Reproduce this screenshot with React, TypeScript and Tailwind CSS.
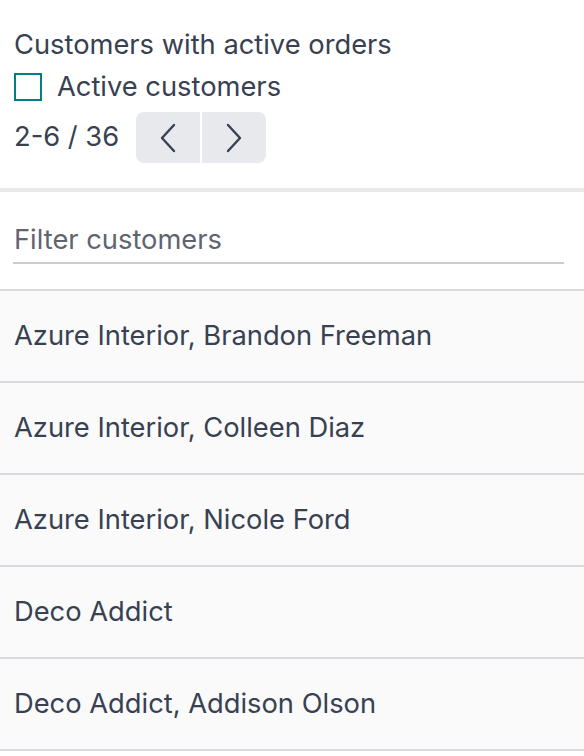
import { useState } from 'react';

const customers = [
  'Azure Interior, Brandon Freeman',
  'Azure Interior, Colleen Diaz',
  'Azure Interior, Nicole Ford',
  'Deco Addict',
  'Deco Addict, Addison Olson',
];

function Chevron({ dir }: { dir: 'left' | 'right' }) {
  return (
    <svg width="16" height="30" viewBox="0 0 16 30" fill="none">
      <polyline
        points={dir === 'left' ? '14,2 2,15 14,28' : '2,2 14,15 2,28'}
        stroke="#374151"
        strokeWidth="2.4"
        strokeLinecap="round"
        strokeLinejoin="round"
      />
    </svg>
  );
}

export default function App() {
  const [active, setActive] = useState(false);
  const [query, setQuery] = useState('');

  return (
    <div className="w-[584px] h-[756px] bg-white overflow-hidden text-[#374151] font-['Inter',sans-serif] text-[27.3px]">
      {/* Header */}
      <div className="px-[14px] pt-[27px] pb-[25px]">
        <div className="leading-[36px]">Customers with active orders</div>
        <label className="flex items-center gap-[15px] h-[48px] cursor-pointer">
          <button
            onClick={() => setActive(!active)}
            className="w-[28px] h-[28px] border-2 border-[#017e84] bg-white"
          />
          <span>Active customers</span>
        </label>
        <div className="flex items-center gap-[17px] mt-[1px]">
          <span>2-6 / 36</span>
          <div className="flex gap-[2px]">
            <button className="w-[64px] h-[51px] bg-[#e7e9ed] rounded-l-[8px] flex items-center justify-center">
              <Chevron dir="left" />
            </button>
            <button className="w-[64px] h-[51px] bg-[#e7e9ed] rounded-r-[8px] flex items-center justify-center">
              <Chevron dir="right" />
            </button>
          </div>
        </div>
      </div>

      <div className="h-[4px] bg-[#e7e9ed]" />

      {/* Filter */}
      <div className="px-[13px] pt-[24px] pb-[25px] border-b-2 border-[#d8dadd]">
        <input
          value={query}
          onChange={(e) => setQuery(e.target.value)}
          placeholder="Filter customers"
          className="w-[551px] h-[48px] border-b-2 border-[#cccccc] text-[#374151] placeholder:text-[#5f6470] outline-none px-[1px]"
        />
      </div>

      {/* Customer list */}
      {customers.map((name) => (
        <div
          key={name}
          className="h-[92px] px-[14px] flex items-center bg-[#fafafa] border-b-2 border-[#d8dadd]"
        >
          {name}
        </div>
      ))}
    </div>
  );
}
